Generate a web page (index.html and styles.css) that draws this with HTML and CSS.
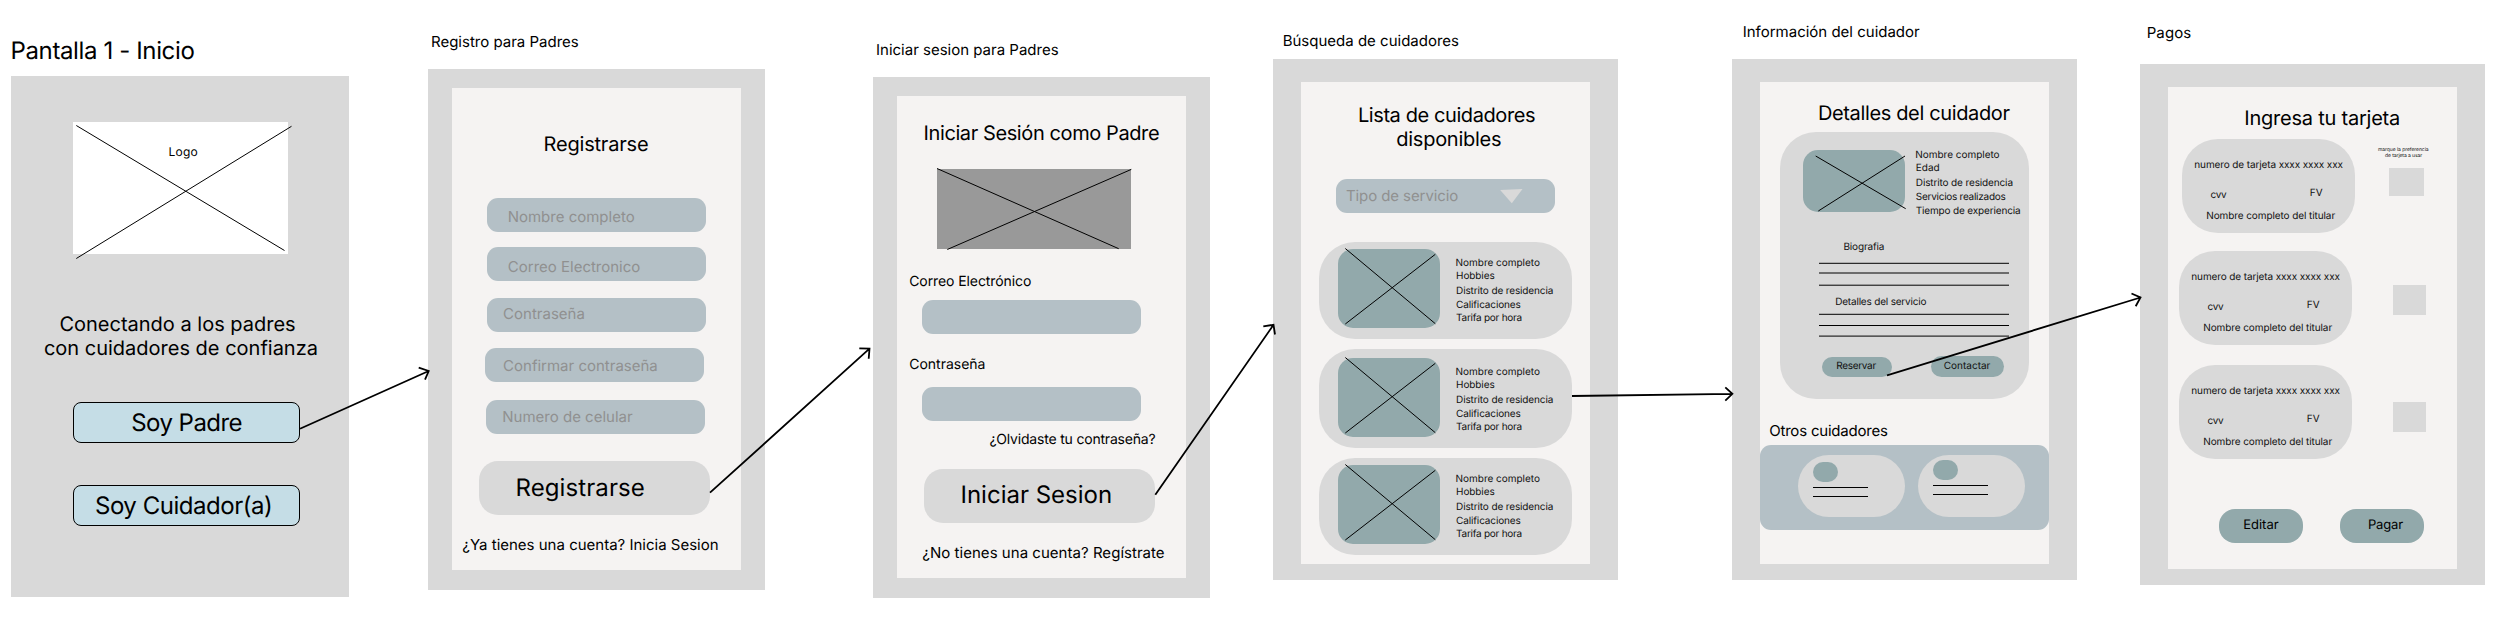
FILE: index.html
```html
<!DOCTYPE html>
<html lang="es">
<head>
<meta charset="utf-8">
<title>Wireframes</title>
<link rel="stylesheet" href="styles.css">
</head>
<body>
<main class="canvas">

<section class="board board-home">
  <h2 class="label">Pantalla 1 - Inicio</h2>
  <div class="frame">
    <div class="logo">
      <svg class="cross" width="215" height="132"><path d="M3.3 3.5 211.5 128.5M3.3 136.5 218.5 4.3"/></svg>
      <span class="logo-text">Logo</span>
    </div>
    <p class="tagline">Conectando a los padres<br>con cuidadores de confianza</p>
    <button class="role">Soy Padre</button>
    <button class="role role-carer">Soy Cuidador(a)</button>
  </div>
</section>

<section class="board board-register">
  <h2 class="label">Registro para Padres</h2>
  <div class="frame">
    <div class="screen">
      <h3 class="title">Registrarse</h3>
      <div class="field f-name">Nombre completo</div>
      <div class="field f-mail">Correo Electronico</div>
      <div class="field f-pass">Contraseña</div>
      <div class="field f-confirm">Confirmar contraseña</div>
      <div class="field f-phone">Numero de celular</div>
      <button class="submit">Registrarse</button>
      <p class="link">¿Ya tienes una cuenta? Inicia Sesion</p>
    </div>
  </div>
</section>

<section class="board board-login">
  <h2 class="label">Iniciar sesion para Padres</h2>
  <div class="frame">
    <div class="screen">
      <h3 class="title">Iniciar Sesión como Padre</h3>
      <div class="banner"><svg class="cross" width="194" height="80"><path d="M0-.5 181.7 79.7M10.3 80.5 194.3.4"/></svg></div>
      <p class="caption c-mail">Correo Electrónico</p>
      <div class="field"></div>
      <p class="caption c-pass">Contraseña</p>
      <div class="field f-second"></div>
      <p class="caption c-forgot">¿Olvidaste tu contraseña?</p>
      <button class="submit">Iniciar Sesion</button>
      <p class="link">¿No tienes una cuenta? Regístrate</p>
    </div>
  </div>
</section>

<section class="board board-search">
  <h2 class="label">Búsqueda de cuidadores</h2>
  <div class="frame wide">
    <div class="screen">
      <h3 class="title"><span class="line-a">Lista de cuidadores</span><span class="line-b">disponibles</span></h3>
      <div class="field select"><span>Tipo de servicio</span><svg class="caret" width="23" height="15"><path d="M.2 1 22.5 0 11.8 14.3z"/></svg></div>
      <article class="carer">
        <div class="thumb"><svg class="cross" width="102" height="79"><path d="M7.3-.5 97.3 74.7M97.3 5.3 7.3 75"/></svg></div>
        <ul class="facts"><li class="w-name">Nombre completo</li><li class="w-hobby">Hobbies</li><li class="w-area">Distrito de residencia</li><li class="w-rate">Calificaciones</li><li class="w-fee">Tarifa por hora</li></ul>
      </article>
      <article class="carer carer-mid">
        <div class="thumb"><svg class="cross" width="102" height="79"><path d="M7.3-.5 97.3 74.7M97.3 5.3 7.3 75"/></svg></div>
        <ul class="facts"><li class="w-name">Nombre completo</li><li class="w-hobby">Hobbies</li><li class="w-area">Distrito de residencia</li><li class="w-rate">Calificaciones</li><li class="w-fee">Tarifa por hora</li></ul>
      </article>
      <article class="carer">
        <div class="thumb"><svg class="cross" width="102" height="79"><path d="M7.3-.5 97.3 74.7M97.3 5.3 7.3 75"/></svg></div>
        <ul class="facts"><li class="w-name">Nombre completo</li><li class="w-hobby">Hobbies</li><li class="w-area">Distrito de residencia</li><li class="w-rate">Calificaciones</li><li class="w-fee">Tarifa por hora</li></ul>
      </article>
    </div>
  </div>
</section>

<section class="board board-detail">
  <h2 class="label">Información del cuidador</h2>
  <div class="frame wide">
    <div class="screen">
      <h3 class="title">Detalles del cuidador</h3>
      <article class="profile">
        <div class="profile-top">
          <div class="thumb"><svg class="cross" width="102" height="62"><path d="M12.7 6 102.7 58.7M15.3 61 102 6"/></svg></div>
          <ul class="facts"><li class="w-name">Nombre completo</li><li>Edad</li><li class="w-area">Distrito de residencia</li><li class="w-services">Servicios realizados</li><li class="w-exp">Tiempo de experiencia</li></ul>
        </div>
        <h4 class="sub s-bio">Biografia</h4>
        <svg class="rules" width="190" height="25"><path d="M0 1.3H190M0 11H190M0 23.2H190"/></svg>
        <h4 class="sub s-service">Detalles del servicio</h4>
        <svg class="rules rules-low" width="190" height="24"><path d="M0 1.3H190M0 12.5H190M0 23.1H190"/></svg>
        <div class="actions"><button class="pill p-book">Reservar</button><button class="pill p-contact">Contactar</button></div>
      </article>
      <h4 class="others-title">Otros cuidadores</h4>
      <div class="others">
        <div class="mini"><i class="avatar"></i><i class="bar"></i><i class="bar"></i></div>
        <div class="mini mini-high"><i class="avatar"></i><i class="bar"></i><i class="bar"></i></div>
      </div>
    </div>
  </div>
</section>

<section class="board board-pay">
  <h2 class="label">Pagos</h2>
  <div class="frame wide">
    <div class="screen">
      <h3 class="title">Ingresa tu tarjeta</h3>
      <div class="option option-first">
        <article class="card"><p class="number">numero de tarjeta xxxx xxxx xxx</p><div class="codes"><span class="cvv">cvv</span><span class="fv">FV</span></div><p class="holder">Nombre completo del titular</p></article>
        <div class="choice"><p class="note"><span class="note-a">marque la preferencia</span><span class="note-b">de tarjeta a usar</span></p><div class="check"></div></div>
      </div>
      <div class="option option-second">
        <article class="card"><p class="number">numero de tarjeta xxxx xxxx xxx</p><div class="codes"><span class="cvv">cvv</span><span class="fv">FV</span></div><p class="holder">Nombre completo del titular</p></article>
        <div class="check"></div>
      </div>
      <div class="option option-third">
        <article class="card"><p class="number">numero de tarjeta xxxx xxxx xxx</p><div class="codes"><span class="cvv">cvv</span><span class="fv">FV</span></div><p class="holder">Nombre completo del titular</p></article>
        <div class="check"></div>
      </div>
      <div class="pay-actions"><button class="pay p-edit">Editar</button><button class="pay p-pay">Pagar</button></div>
    </div>
  </div>
</section>

<svg class="arrows" width="2513" height="638">
  <path d="M300 428.7 428.7 371M418.7 367.6 428.7 371 425 379.7"/>
  <path d="M710 492.7 869.5 348.7M859.3 348.3 869.5 348.7 868.7 358.7"/>
  <path d="M1155.3 494.7 1273.5 324.8M1263.3 326.4 1273.5 324.8 1275 334.5"/>
  <path d="M1572 396 1732.4 393.8M1725.3 387.3 1732.4 393.8 1725.3 400.7"/>
  <path d="M1887 375.3 2140.5 297.5M2131.5 293.5 2140.5 297.5 2135.7 306.3"/>
</svg>
</main>
</body>
</html>
```
FILE: styles.css
```css
* { box-sizing: border-box; }
body { margin: 0; background: #fff; color: #000; font-family: "Inter", "Liberation Sans", sans-serif; font-weight: 390; text-rendering: geometricPrecision; text-indent: .3px; overflow: hidden; }
h2, h3, h4, p, ul { margin: 0; padding: 0; font-weight: inherit; list-style: none; white-space: nowrap; }
button { display: block; border: 0; padding: 0; font: inherit; color: inherit; text-align: left; text-indent: inherit; white-space: nowrap; text-rendering: inherit; }
svg { display: block; }

.canvas { position: relative; width: 2513px; height: 638px; overflow: hidden; }
.board { position: absolute; }
.board-home { left: 11px; top: 36px; }
.board-register { left: 428px; top: 32px; }
.board-login { left: 873px; top: 40px; }
.board-search { left: 1273px; top: 31px; }
.board-detail { left: 1732px; top: 22px; }
.board-pay { left: 2140px; top: 23px; }

.label { font-size: 15px; line-height: 19px; padding-left: 2.7px; margin-bottom: 18px; }
.board-home .label { font-size: 24px; line-height: 29px; letter-spacing: -.369px; padding: 0; margin: 0 0 11px -.8px; }
.board-search .label { padding-left: 9.4px; margin-bottom: 9px; }
.board-detail .label { padding-left: 10.4px; }
.board-pay .label { padding-left: 6.4px; margin-bottom: 22px; letter-spacing: .1px; }

.frame { display: flex; flex-direction: column; align-items: flex-start; width: 337px; height: 521px; padding: 19px 24px; background: #d9d9d9; }
.frame.wide { width: 345px; padding: 23px 28px; }
.screen { display: flex; flex-direction: column; align-items: flex-start; flex: none; width: 289px; height: 482px; background: #f5f3f2; }
.title { font-size: 20px; line-height: 24px; }
.cross { overflow: visible; fill: none; stroke: #000; stroke-width: 1; }
.field { flex: none; display: flex; align-items: center; width: 219px; height: 34px; border-radius: 11px; background: #b4c0c6; color: #909090; font-size: 15px; line-height: 18px; white-space: nowrap; }
.submit { flex: none; width: 231px; height: 54px; padding: 0 0 1px 36.2px; border-radius: 19px; background: #d9d9d9; font-size: 24px; line-height: 30px; }
.link { font-size: 15px; line-height: 18px; margin-top: 20.7px; }

/* Home */
.board-home .frame { width: 338px; padding: 46px 0 0 62px; }
.logo { flex: none; display: grid; width: 215px; height: 132px; background: #fff; }
.logo > * { grid-area: 1 / 1; }
.logo-text { padding: 22px 0 0 95.3px; font-size: 12px; line-height: 16px; letter-spacing: .2px; }
.tagline { margin: 58px 0 0 -29.1px; font-size: 20px; line-height: 24px; text-indent: 15.5px; }
.role { flex: none; width: 227px; height: 41px; margin-top: 42px; border: 1px solid #000; border-radius: 8px; background: #c5dde6; font-size: 24px; line-height: 30px; letter-spacing: -.55px; text-align: center; }
.role-carer { padding-right: 6px; letter-spacing: -.466px; }

/* Register */
.board-register .title { margin: 44px 0 0 91.3px; letter-spacing: -.2px; }
.f-name { margin: 42px 0 0 35px; padding: 3px 0 0 20.4px; }
.f-mail { margin: 15px 0 0 35px; padding: 5px 0 0 20.5px; }
.f-pass { margin: 17px 0 0 35px; padding: 0 0 3px 15.8px; }
.f-confirm { margin: 16px 0 0 33px; padding: 1px 0 0 17.8px; }
.f-phone { margin: 18px 0 0 34px; padding-left: 16px; }
.board-register .submit { margin: 27px 0 0 27px; letter-spacing: .1px; }
.board-register .link { margin-left: 10px; }

/* Login */
.board-login .title { margin: 25px 0 0 26.3px; letter-spacing: -.405px; }
.banner { flex: none; width: 194px; height: 80px; margin: 24px 0 0 40px; background: #999; }
.caption { margin-left: 11.9px; font-size: 14px; line-height: 18px; }
.c-mail { margin-top: 24px; letter-spacing: -.087px; }
.board-login .field { margin: 9px 0 0 25px; }
.c-pass { margin-top: 22px; }
.board-login .f-second { margin-top: 13px; }
.c-forgot { margin: 10.2px 0 0 92.1px; letter-spacing: -.196px; }
.board-login .submit { margin: 19.8px 0 0 27px; }
.board-login .link { margin-left: 25px; letter-spacing: .03px; }

/* Search */
.board-search .title { margin: 21px 0 0 56.6px; }
.title span { display: block; }
.line-a { letter-spacing: -.406px; }
.line-b { padding-left: 38.4px; letter-spacing: -.26px; }
.select { margin: 28px 0 0 35px; padding-left: 9.6px; letter-spacing: -.08px; }
.select span { width: 154px; }
.caret { margin-bottom: 0; fill: #d9d9d9; }
.carer { flex: none; display: flex; width: 253px; height: 97px; margin: 29px 0 0 18px; padding: 7px 0 0 19px; border-radius: 36px; background: #d9d9d9; }
.carer + .carer { margin-top: 10px; }
.carer-mid { height: 99px; padding-top: 9px; }
.thumb { flex: none; width: 102px; height: 79px; border-radius: 15px; background: #92a9ab; }
.facts { padding: 7.6px 0 0 15.3px; font-size: 10px; line-height: 13px; color: #111; }
.facts li:nth-child(3) { margin: 2px 0 1px; }
.facts li:nth-child(n+2) { padding-left: .5px; }
.w-name { letter-spacing: -.027px; }
.w-hobby { letter-spacing: -.1px; }
.w-area { letter-spacing: -.134px; }
.w-rate { letter-spacing: -.137px; }
.w-fee { margin-top: .6px; letter-spacing: -.252px; }
.w-services { letter-spacing: -.262px; }
.w-exp { margin-top: 1px; letter-spacing: -.16px; }

/* Detail */
.board-detail .title { margin: 19px 0 0 57.6px; letter-spacing: -.354px; }
.profile { flex: none; width: 249px; height: 267px; margin: 7px 0 0 20px; padding: 16.2px 0 0 23px; border-radius: 36px; background: #d9d9d9; }
.profile-top { display: flex; height: 69px; }
.profile .thumb { height: 62px; margin-top: 1.8px; }
.profile .facts { padding: .4px 0 0 10px; }
.sub { font-size: 10px; line-height: 14px; color: #111; }
.s-bio { margin: 22.6px 0 0 40.2px; letter-spacing: -.175px; }
.s-service { margin: 7.8px 0 0 31.9px; letter-spacing: -.192px; }
.rules { margin: 8.2px 0 0 16px; stroke: #000; stroke-width: 1; }
.rules-low { margin-top: 4.2px; }
.actions { display: flex; align-items: flex-end; gap: 39px; margin: 19px 0 0 19px; font-size: 10px; line-height: 14px; color: #111; }
.pill { border-radius: 10.5px; background: #92a9ab; }
.p-book { width: 70px; height: 20px; padding: 0 0 2px 13.9px; letter-spacing: -.305px; }
.p-contact { width: 73px; height: 21px; padding: 0 0 1px 12.5px; }
.others-title { margin: 22.7px 0 0 8.9px; font-size: 15px; line-height: 18px; letter-spacing: -.2px; }
.others { flex: none; display: flex; gap: 13px; width: 289px; height: 85px; margin-top: 5.3px; padding: 10px 0 0 38px; border-radius: 11px; background: #b4c0c6; }
.mini { width: 107px; height: 62px; padding: 7px 0 0 15px; border-radius: 31px; background: #d9d9d9; }
.mini-high { padding-top: 5px; }
.avatar, .bar { display: block; }
.avatar { width: 25px; height: 20px; margin-bottom: 5px; border-radius: 10px; background: #92a9ab; }
.bar { width: 55px; height: 1px; margin-bottom: 8px; background: #000; }

/* Payment */
.board-pay .title { margin: 19px 0 0 76px; letter-spacing: -.228px; }
.option { display: flex; }
.option-first { margin: 9px 0 0 11px; }
.option-first .card { margin-left: 3px; }
.option-second { margin: 18px 0 0 11px; }
.option-third { margin: 20px 0 0 11px; }
.card { flex: none; width: 173px; height: 94px; padding-top: 19px; border-radius: 36px; background: #d9d9d9; font-size: 10px; line-height: 14px; color: #111; }
.number { padding-left: 12px; letter-spacing: -.115px; }
.codes { display: flex; margin-top: 14px; padding-left: 28.3px; }
.cvv { width: 99.2px; padding-top: 2px; letter-spacing: -.4px; }
.holder { margin-top: 7px; padding-left: 23.9px; letter-spacing: -.092px; }
.note { margin: 7.5px 0 9.5px 22.7px; font-size: 5px; line-height: 6px; color: #111; }
.note span { display: block; }
.note-a { letter-spacing: -.054px; }
.note-b { padding-left: 7.1px; letter-spacing: -.083px; }
.check { width: 33px; height: 30px; margin: 34px 0 0 41px; background: #d9d9d9; }
.option-first .check { width: 35px; height: 28px; margin: 0 0 0 34px; }
.option-third .check { margin-top: 37px; }
.pay-actions { display: flex; gap: 37px; margin: 50px 0 0 51px; }
.pay { width: 84px; height: 34px; border-radius: 16px; background: #92a9ab; font-size: 13px; line-height: 18px; }
.p-edit { padding: 0 0 3px 23.9px; }
.p-pay { padding: 0 0 3px 27.6px; letter-spacing: -.119px; }

.arrows { position: absolute; left: 0; top: 0; fill: none; stroke: #000; stroke-width: 1.8; }
```
